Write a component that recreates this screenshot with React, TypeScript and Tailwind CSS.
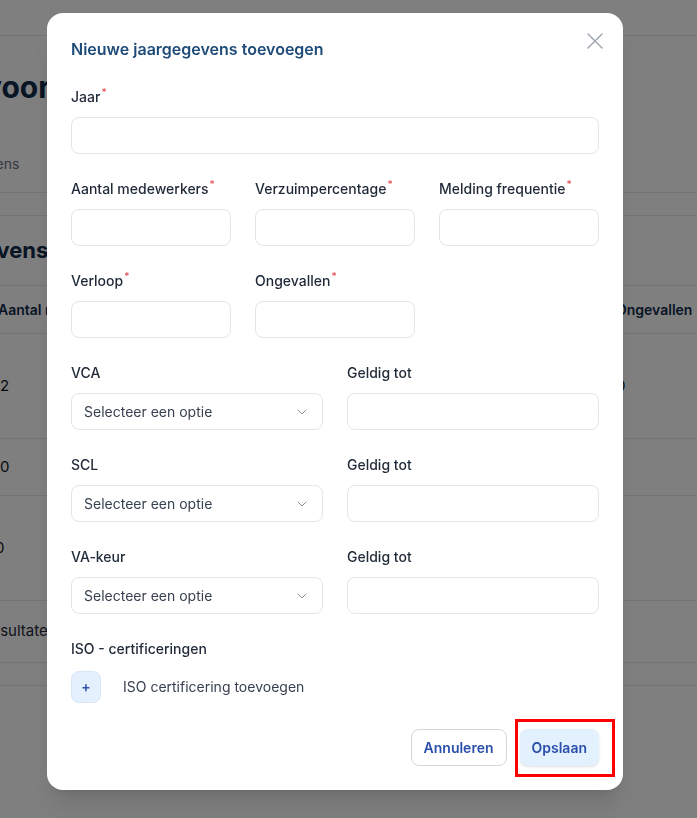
import { ChevronDown, X } from 'lucide-react'

const font = { fontFamily: 'Inter, "Noto Sans", Arial, sans-serif' }

function FieldLabel({ text, required }: { text: string; required?: boolean }) {
  return (
    <label className="block text-sm font-medium leading-5 text-[#1f2937]">
      {text}
      {required ? <span className="relative -top-[6px] ml-px text-[10px] leading-none text-[#e5484d]">*</span> : null}
    </label>
  )
}

function TextField({ label, required }: { label: string; required?: boolean }) {
  return (
    <div className="flex flex-col gap-2.5">
      <FieldLabel text={label} required={required} />
      <input
        type="text"
        className="h-[37px] w-full rounded-lg border border-[#e3e5e8] bg-white px-3 text-sm text-[#1f2937] outline-none"
      />
    </div>
  )
}

function SelectField({ label }: { label: string }) {
  return (
    <div className="flex flex-col gap-2.5">
      <FieldLabel text={label} />
      <button
        type="button"
        className="flex h-[37px] w-full items-center justify-between rounded-lg border border-[#e3e5e8] bg-white pl-3 pr-3 text-left text-sm text-[#374151]"
      >
        <span>Selecteer een optie</span>
        <ChevronDown className="h-4 w-4 text-[#8a8f98]" strokeWidth={1.5} />
      </button>
    </div>
  )
}

// page underneath the dialog
function Backdrop() {
  const rows = [
    { h: 'h-[105px]', left: '2', shift: '', right: '0' },
    { h: 'h-[57px]', left: '0', shift: '', right: '' },
    { h: 'h-[105px]', left: '0', shift: '-ml-[5px]', right: '' },
  ]
  return (
    <div className="h-[818px] w-full overflow-hidden bg-white">
      <div className="h-9 border-b border-[#e5e7eb]" />
      <h1 className="-ml-[16px] mt-[33px] whitespace-nowrap text-3xl font-bold leading-9 text-[#0f2b4a]">voor Bedrijf</h1>
      <div className="mt-[49px] border-b border-[#e5e7eb]">
        <div className="-ml-[74px] pb-[18px] text-sm leading-5 text-[#6b7280]">Jaargegevens</div>
      </div>
      <div className="mt-[22px] border-t border-[#e5e7eb]">
        <div className="flex h-[70px] items-center border-b border-[#e5e7eb]">
          <h2 className="-ml-[104px] whitespace-nowrap text-[22px] font-bold text-[#0f2b4a]">Jaargegevens overzicht</h2>
        </div>
        <div className="-ml-[2px] grid h-12 grid-cols-[618px_1fr] items-center border-b border-[#e5e7eb] text-sm font-semibold text-[#0f2b4a]">
          <span className="whitespace-nowrap">Aantal medewerkers</span>
          <span>Ongevallen</span>
        </div>
        {rows.map((r, i) => (
          <div
            key={i}
            className={`grid ${r.h} grid-cols-[618px_1fr] items-center border-b border-[#e5e7eb] text-[15px] text-[#111827]`}
          >
            <span className={r.shift}>{r.left}</span>
            <span className="-ml-[2px]">{r.right}</span>
          </div>
        ))}
        <div className="flex h-[62px] items-center border-b border-[#e5e7eb]">
          <span className="-ml-[18px] whitespace-nowrap text-[15px] text-[#1f2937]">Resultaten</span>
        </div>
        <div className="h-[23px] border-b border-[#e5e7eb]" />
      </div>
    </div>
  )
}

export default function App() {
  return (
    <div className="relative h-[818px] w-full overflow-hidden" style={font}>
      <Backdrop />
      <div className="fixed inset-0 bg-black/50" />

      <div className="fixed inset-0 pl-[47px] pt-[13px]">
        <div className="relative w-[576px] rounded-2xl bg-white p-6 shadow-xl">
          <button type="button" className="absolute right-[14px] top-[14px] text-[#9aa0ac]" aria-label="Sluiten">
            <X className="h-7 w-7" strokeWidth={1.2} />
          </button>

          <h2 className="text-base font-semibold leading-6 text-[#1e4b77]">Nieuwe jaargegevens toevoegen</h2>

          <div className="mt-[26px] flex flex-col gap-[25px]">
            <TextField label="Jaar" required />

            <div className="grid grid-cols-3 gap-x-6 gap-y-[25px]">
              <TextField label="Aantal medewerkers" required />
              <TextField label="Verzuimpercentage" required />
              <TextField label="Melding frequentie" required />
              <TextField label="Verloop" required />
              <TextField label="Ongevallen" required />
            </div>

            <div className="grid grid-cols-2 gap-x-6 gap-y-[25px]">
              <SelectField label="VCA" />
              <TextField label="Geldig tot" />
              <SelectField label="SCL" />
              <TextField label="Geldig tot" />
              <SelectField label="VA-keur" />
              <TextField label="Geldig tot" />
            </div>

            <div>
              <FieldLabel text="ISO - certificeringen" />
              <div className="mt-3 flex items-center gap-[22px]">
                <button
                  type="button"
                  className="flex h-8 w-[30px] items-center justify-center rounded-lg border border-[#d7e6f7] bg-[#e4f0fd] text-sm font-semibold text-[#2a4faa]"
                >
                  +
                </button>
                <span className="text-sm text-[#374151]">ISO certificering toevoegen</span>
              </div>
            </div>
          </div>

          <div className="mt-[26px] flex justify-end gap-[13px]">
            <button
              type="button"
              className="h-[37px] rounded-lg border border-[#d4d6dd] bg-white px-3 text-sm font-semibold text-[#2a4faa]"
            >
              Annuleren
            </button>
            <div className="relative">
              <button
                type="button"
                className="h-[37px] rounded-lg bg-[#e3f0fd] px-3 text-sm font-semibold text-[#2a4faa] shadow-sm"
              >
                Opslaan
              </button>
              <div className="pointer-events-none absolute -bottom-[11px] -left-[5px] -right-[16px] -top-[10px] border-[3px] border-[#ff0000]" />
            </div>
          </div>
        </div>
      </div>
    </div>
  )
}
